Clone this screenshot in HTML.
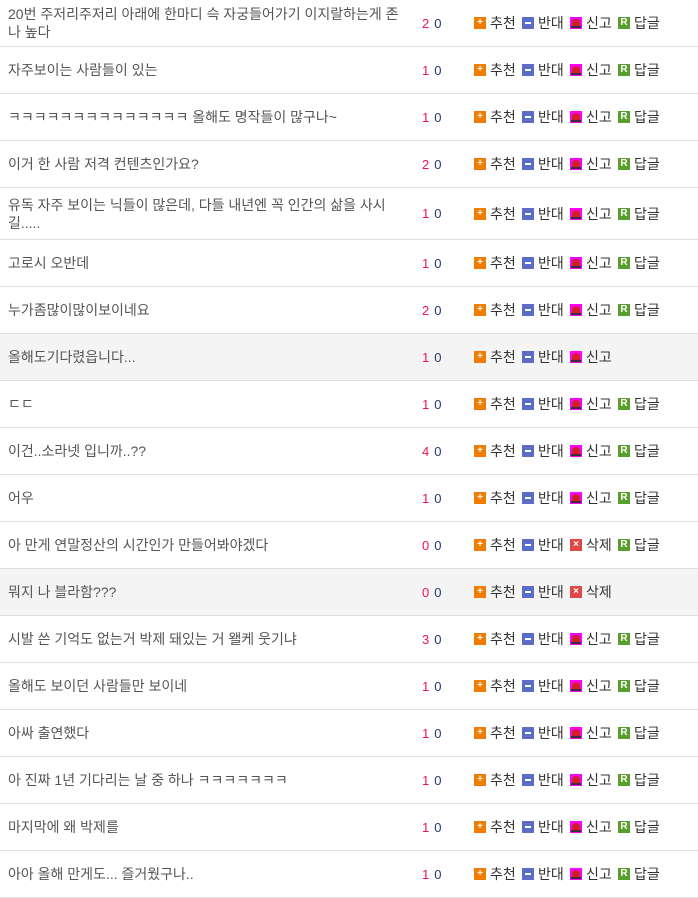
<!DOCTYPE html>
<html><head><meta charset="utf-8"><style>
*{margin:0;padding:0;box-sizing:border-box}
body{width:698px;height:895px;overflow:hidden;background:#fff;font-family:"Liberation Sans","Noto Sans CJK KR",sans-serif;font-size:14px;color:#555}
.r{position:relative;border-bottom:1px solid #ddd;height:47px}
.r.g{background:#f4f4f4}
.t{position:absolute;left:8px;top:0;bottom:0;width:396px;display:flex;align-items:center;line-height:18px}
.n{position:absolute;left:422px;top:0;bottom:0;display:flex;align-items:center;font-size:13px}
.n b{font-weight:normal;color:#e8174f;margin-right:5px}
.n i{font-style:normal;color:#22396e}
.a{position:absolute;left:474px;top:0;bottom:0;display:flex;align-items:center;color:#333;font-size:14px}
.ic{width:12px;height:12px;display:inline-block;margin-right:4px;position:relative;color:#fff;font-size:10px;line-height:12px;text-align:center;font-weight:bold;flex:none}
.a span.l{width:32px;display:inline-block}
.p{background:#f07c00}.m{background:#5b6bc8}.s{background:#ff00ff}.d{background:#e04848}.rr{background:#5a9e2e}
.m:after{content:"";position:absolute;left:3px;top:5px;width:6px;height:2px;background:#fff}
.s:after{content:"";position:absolute;left:2px;top:2px;width:8px;height:8px;background:#c22;border-radius:4px 4px 0 0}
.s:before{content:"";position:absolute;left:1px;bottom:1px;width:10px;height:2px;background:#333;z-index:1}
</style></head><body>
<div class="r"><div class="t">20번 주저리주저리 아래에 한마디 슥 자궁들어가기 이지랄하는게 존나 높다</div><div class="n"><b>2</b><i>0</i></div><div class="a"><span class="ic p">+</span><span class="l">추천</span><span class="ic m"></span><span class="l">반대</span><span class="ic s"></span><span class="l">신고</span><span class="ic rr">R</span><span>답글</span></div></div>
<div class="r"><div class="t">자주보이는 사람들이 있는</div><div class="n"><b>1</b><i>0</i></div><div class="a"><span class="ic p">+</span><span class="l">추천</span><span class="ic m"></span><span class="l">반대</span><span class="ic s"></span><span class="l">신고</span><span class="ic rr">R</span><span>답글</span></div></div>
<div class="r"><div class="t">ㅋㅋㅋㅋㅋㅋㅋㅋㅋㅋㅋㅋㅋㅋ 올해도 명작들이 많구나~</div><div class="n"><b>1</b><i>0</i></div><div class="a"><span class="ic p">+</span><span class="l">추천</span><span class="ic m"></span><span class="l">반대</span><span class="ic s"></span><span class="l">신고</span><span class="ic rr">R</span><span>답글</span></div></div>
<div class="r"><div class="t">이거 한 사람 저격 컨텐츠인가요?</div><div class="n"><b>2</b><i>0</i></div><div class="a"><span class="ic p">+</span><span class="l">추천</span><span class="ic m"></span><span class="l">반대</span><span class="ic s"></span><span class="l">신고</span><span class="ic rr">R</span><span>답글</span></div></div>
<div class="r" style="height:52px"><div class="t">유독 자주 보이는 닉들이 많은데, 다들 내년엔 꼭 인간의 삶을 사시<br>길.....</div><div class="n"><b>1</b><i>0</i></div><div class="a"><span class="ic p">+</span><span class="l">추천</span><span class="ic m"></span><span class="l">반대</span><span class="ic s"></span><span class="l">신고</span><span class="ic rr">R</span><span>답글</span></div></div>
<div class="r"><div class="t">고로시 오반데</div><div class="n"><b>1</b><i>0</i></div><div class="a"><span class="ic p">+</span><span class="l">추천</span><span class="ic m"></span><span class="l">반대</span><span class="ic s"></span><span class="l">신고</span><span class="ic rr">R</span><span>답글</span></div></div>
<div class="r"><div class="t">누가좀많이많이보이네요</div><div class="n"><b>2</b><i>0</i></div><div class="a"><span class="ic p">+</span><span class="l">추천</span><span class="ic m"></span><span class="l">반대</span><span class="ic s"></span><span class="l">신고</span><span class="ic rr">R</span><span>답글</span></div></div>
<div class="r g"><div class="t">올해도기다렸읍니다...</div><div class="n"><b>1</b><i>0</i></div><div class="a"><span class="ic p">+</span><span class="l">추천</span><span class="ic m"></span><span class="l">반대</span><span class="ic s"></span><span class="l">신고</span></div></div>
<div class="r"><div class="t">ㄷㄷ</div><div class="n"><b>1</b><i>0</i></div><div class="a"><span class="ic p">+</span><span class="l">추천</span><span class="ic m"></span><span class="l">반대</span><span class="ic s"></span><span class="l">신고</span><span class="ic rr">R</span><span>답글</span></div></div>
<div class="r"><div class="t">이건..소라넷 입니까..??</div><div class="n"><b>4</b><i>0</i></div><div class="a"><span class="ic p">+</span><span class="l">추천</span><span class="ic m"></span><span class="l">반대</span><span class="ic s"></span><span class="l">신고</span><span class="ic rr">R</span><span>답글</span></div></div>
<div class="r"><div class="t">어우</div><div class="n"><b>1</b><i>0</i></div><div class="a"><span class="ic p">+</span><span class="l">추천</span><span class="ic m"></span><span class="l">반대</span><span class="ic s"></span><span class="l">신고</span><span class="ic rr">R</span><span>답글</span></div></div>
<div class="r"><div class="t">아 만게 연말정산의 시간인가 만들어봐야겠다</div><div class="n"><b>0</b><i>0</i></div><div class="a"><span class="ic p">+</span><span class="l">추천</span><span class="ic m"></span><span class="l">반대</span><span class="ic d">×</span><span class="l">삭제</span><span class="ic rr">R</span><span>답글</span></div></div>
<div class="r g"><div class="t">뭐지 나 블라함???</div><div class="n"><b>0</b><i>0</i></div><div class="a"><span class="ic p">+</span><span class="l">추천</span><span class="ic m"></span><span class="l">반대</span><span class="ic d">×</span><span class="l">삭제</span></div></div>
<div class="r"><div class="t">시발 쓴 기억도 없는거 박제 돼있는 거 왤케 웃기냐</div><div class="n"><b>3</b><i>0</i></div><div class="a"><span class="ic p">+</span><span class="l">추천</span><span class="ic m"></span><span class="l">반대</span><span class="ic s"></span><span class="l">신고</span><span class="ic rr">R</span><span>답글</span></div></div>
<div class="r"><div class="t">올해도 보이던 사람들만 보이네</div><div class="n"><b>1</b><i>0</i></div><div class="a"><span class="ic p">+</span><span class="l">추천</span><span class="ic m"></span><span class="l">반대</span><span class="ic s"></span><span class="l">신고</span><span class="ic rr">R</span><span>답글</span></div></div>
<div class="r"><div class="t">아싸 출연했다</div><div class="n"><b>1</b><i>0</i></div><div class="a"><span class="ic p">+</span><span class="l">추천</span><span class="ic m"></span><span class="l">반대</span><span class="ic s"></span><span class="l">신고</span><span class="ic rr">R</span><span>답글</span></div></div>
<div class="r"><div class="t">아 진짜 1년 기다리는 날 중 하나 ㅋㅋㅋㅋㅋㅋㅋ</div><div class="n"><b>1</b><i>0</i></div><div class="a"><span class="ic p">+</span><span class="l">추천</span><span class="ic m"></span><span class="l">반대</span><span class="ic s"></span><span class="l">신고</span><span class="ic rr">R</span><span>답글</span></div></div>
<div class="r"><div class="t">마지막에 왜 박제를</div><div class="n"><b>1</b><i>0</i></div><div class="a"><span class="ic p">+</span><span class="l">추천</span><span class="ic m"></span><span class="l">반대</span><span class="ic s"></span><span class="l">신고</span><span class="ic rr">R</span><span>답글</span></div></div>
<div class="r"><div class="t">아아 올해 만게도... 즐거웠구나..</div><div class="n"><b>1</b><i>0</i></div><div class="a"><span class="ic p">+</span><span class="l">추천</span><span class="ic m"></span><span class="l">반대</span><span class="ic s"></span><span class="l">신고</span><span class="ic rr">R</span><span>답글</span></div></div>
</body></html>
